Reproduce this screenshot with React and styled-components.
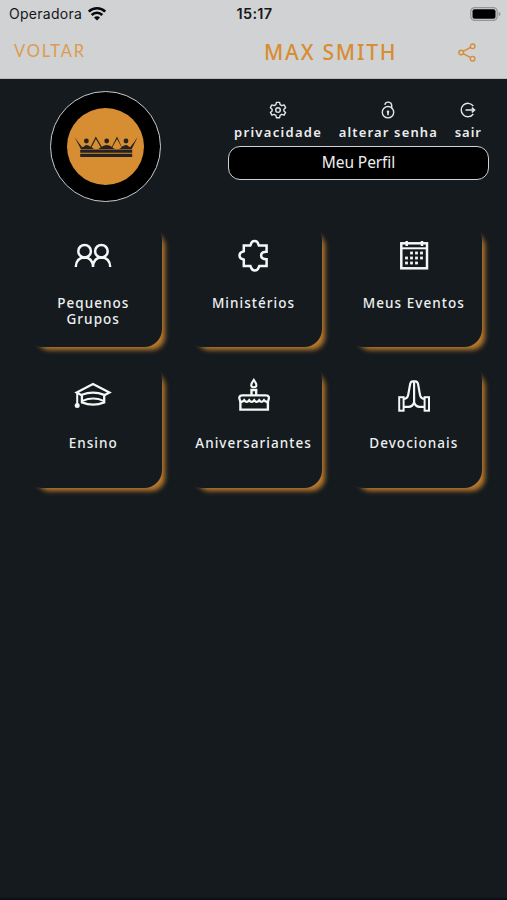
import React from 'react'
import styled, { createGlobalStyle } from 'styled-components'

const orange = '#d78d32'
const dark = '#141a1e'

const GlobalStyle = createGlobalStyle`
  * {
    box-sizing: border-box;
  }
  body {
    margin: 0;
    background: ${dark};
    font-family: 'Noto Sans', sans-serif;
  }
  svg {
    display: block;
    overflow: visible;
  }
`

const Screen = styled.div`
  width: 507px;
  height: 900px;
  overflow: hidden;
  background: ${dark};
  border-bottom: 2px solid #0c0f13;
`

const Header = styled.header`
  height: 79px;
  background: #d1d2d4;
  border-bottom: 1px solid #babcbf;
`

const StatusBar = styled.div`
  height: 27px;
  padding: 0 6px 0 9px;
  display: grid;
  grid-template-columns: 1fr auto 1fr;
  align-items: center;
  color: #161719;
  font-family: Inter, sans-serif;
  font-size: 14px;
`

const Carrier = styled.div`
  display: flex;
  align-items: center;
  gap: 6px;
  letter-spacing: 0.27px;
`

const Clock = styled.div`
  padding-right: 1px;
  font-weight: 600;
  font-size: 14.5px;
  letter-spacing: 0.3px;
`

const Battery = styled.div`
  justify-self: end;
`

const NavBar = styled.nav`
  height: 50px;
  padding: 0 31px 0 14px;
  display: flex;
  align-items: center;
  color: ${orange};
`

const BackButton = styled.button`
  width: 250px;
  padding: 0 0 2px;
  border: 0;
  background: none;
  color: #dc9b50;
  text-align: left;
  font: 400 16.5px/20px Lato, sans-serif;
  letter-spacing: 1.8px;
`

const Title = styled.h1`
  flex: 1;
  margin: 0;
  font-size: 21px;
  line-height: 24px;
  font-weight: 500;
  letter-spacing: 1.8px;
  white-space: nowrap;
`

const Profile = styled.section`
  padding: 12px 18px 0 50px;
  display: flex;
  justify-content: space-between;
`

const Avatar = styled.div`
  width: 111px;
  height: 111px;
  display: flex;
  align-items: center;
  justify-content: center;
  border: 1.5px solid #c9cacb;
  border-radius: 50%;
  background: #000;
`

const AvatarDisc = styled.div`
  width: 77px;
  height: 77px;
  display: flex;
  align-items: center;
  justify-content: center;
  border-radius: 50%;
  background: ${orange};
`

const ProfileMenu = styled.div`
  width: 261px;
  padding-top: 10px;
`

const Actions = styled.div`
  height: 45px;
  padding: 0 7px 0 6px;
  display: flex;
  justify-content: space-between;
`

const Action = styled.div`
  display: flex;
  flex-direction: column;
  align-items: center;
  gap: 5px;
  color: #eceded;
  font-size: 13px;
  line-height: 16px;
  font-weight: 600;
  letter-spacing: ${(props) => props.$spacing};
  white-space: nowrap;
`

const ProfileButton = styled.button`
  width: 100%;
  height: 34px;
  padding: 0 0 3px;
  border: 1.5px solid #d0d1d2;
  border-radius: 12px;
  background: #000;
  color: #eee;
  font: 400 15.5px/20px 'Noto Sans', sans-serif;
  letter-spacing: -0.1px;
`

const Grid = styled.main`
  padding: 19.5px 25px 0;
  display: grid;
  grid-template-columns: repeat(3, 136.5px);
  column-gap: 23.8px;
  row-gap: 15px;
`

/* the negative spread keeps the glow off the top right and bottom left corners */
const Card = styled.div`
  height: 125.5px;
  padding-top: 16px;
  display: flex;
  flex-direction: column;
  align-items: center;
  border-radius: 18px;
  background: ${dark};
  box-shadow: 7px 7px 5px -4px #b9792c;
`

const CardLabel = styled.div`
  width: ${(props) => props.$width || '130px'};
  margin-top: 21px;
  color: #eef0f0;
  font-size: 13.5px;
  line-height: 16px;
  font-weight: 500;
  letter-spacing: 1.05px;
  text-align: center;
`

function CardIcon({ children }) {
  return (
    <svg width="36" height="36" viewBox="0 0 36 36" fill="none" stroke="#f5f6f6" strokeWidth="2.5">
      {children}
    </svg>
  )
}

function WifiIcon() {
  return (
    <svg width="18" height="14" viewBox="0 0 18 14" fill="none" stroke="#08090a" strokeWidth="2.6">
      <path d="M.8 4.7a11.6 11.6 0 0 1 16.4 0" />
      <path d="M3.7 8a7.5 7.5 0 0 1 10.6 0" />
      <path d="M9 13.5 6 10.5a4.2 4.2 0 0 1 6 0z" fill="#08090a" stroke="none" />
    </svg>
  )
}

function BatteryIcon() {
  return (
    <svg width="31" height="14" viewBox="0 0 31 14">
      <rect x="0.8" y="0.6" width="26.4" height="12.8" rx="4" fill="none" stroke="#929496" strokeWidth="1.2" />
      <rect x="2.5" y="2.3" width="23" height="9.4" rx="2" fill="#000" />
      <path d="M28.7 4.8v4.4q1.8-.8 1.8-2.2t-1.8-2.2" fill="#929496" />
    </svg>
  )
}

function ShareIcon() {
  return (
    <svg width="18" height="19" viewBox="0 0 18 19" fill="none" stroke={orange} strokeWidth="1.4">
      <circle cx="3.2" cy="9.5" r="2.3" />
      <circle cx="14.6" cy="3.3" r="2.3" />
      <circle cx="14.6" cy="15.7" r="2.3" />
      <path d="m5.2 8.4 7.4-4M5.2 10.6l7.4 4" />
    </svg>
  )
}

function Crown() {
  return (
    <svg width="62" height="20" viewBox="0 0 62 20" fill="#252321">
      <path d="M-.4.3 6 12.300h50.600L62.600.3 55.300 10q-1.800-1.800-4-2-2.200.2-4.600 1.800L42-.6l-5.200 10.400q-2.600-1.800-5-1.800t-5 1.800L20.800-.6l-5.200 10.400Q13.400 8.200 11.200 8 9 8.200 7 10z" />
      <path d="m2.500 4 5.300 6.200 2.600-1.600zM20.900 2l-4.300 8.200q1.600 2 4.600 2t4.500-2zM42 2l-4.700 8.200q1.700 2 4.800 2t4.500-2zM60 4l-5.400 6-2.400-1.400z" fill={orange} />
      <circle cx="11.4" cy="4" r="2.4" />
      <circle cx="31.7" cy="4" r="2.4" />
      <circle cx="51" cy="4" r="2.4" />
      <path d="M5.2 12.800h52v2.900h-52zM5.200 16.700h52v3.200h-52z" />
    </svg>
  )
}

function GearIcon() {
  return (
    <svg width="18" height="18" viewBox="0 0 18 18" fill="none" stroke="#e5e6e7" strokeWidth="1.4" strokeLinejoin="round">
      <path d="M7.4 1.4 6.900 3.700l-1.700 1-2.300-.8-1.500 2.800 1.700 1.500v1.700l-1.700 1.500 1.500 2.800 2.300-.8 1.700 1 .5 2.300h3.200l.5-2.300 1.700-1 2.300.8 1.500-2.800-1.700-1.500V8.200l1.700-1.500-1.500-2.800-2.300.8-1.700-1-.5-2.300z" />
      <circle cx="9" cy="9.1" r="2.3" />
    </svg>
  )
}

function LockIcon() {
  return (
    <svg width="18" height="18" viewBox="0 0 18 18" fill="none" stroke="#e5e6e7" strokeWidth="1.4">
      <circle cx="9" cy="11.2" r="5.7" />
      <path d="M5.800 3.800a3.500 3.500 0 0 1 6.900.8v2.800" />
      <path d="M9 11v3.200" strokeWidth="1.6" />
      <circle cx="9" cy="10.8" r="1.3" fill="#e5e6e7" stroke="none" />
    </svg>
  )
}

function ExitIcon() {
  return (
    <svg width="18" height="18" viewBox="0 0 18 18" fill="none" stroke="#e5e6e7" strokeWidth="1.4">
      <path d="M14.3 5a6.700 6.700 0 1 0 0 8" />
      <path d="M6.5 9h9.300M12.800 6.600 15.600 9l-2.800 2.400" />
    </svg>
  )
}

function GroupsIcon() {
  return (
    <CardIcon>
      <circle cx="9.6" cy="13.2" r="6.3" />
      <circle cx="26.4" cy="13.2" r="6.3" />
      <path d="M.8 29q.2-9.200 8.800-9.500Q17.800 19.800 18 29q.2-9.200 8.400-9.500Q35 19.800 35.200 29" />
    </CardIcon>
  )
}

function PuzzleIcon() {
  return (
    <CardIcon>
      <path d="M7.8 7.500h6.600c.6-1.200.4-4.400 4.200-4.400s3.600 3.200 4.200 4.400h7.800v6.300c-1.500 0-5.500.2-5.500 3.700s4 3.700 5.500 3.700v6.900h-7.400c-.8 1.300-.6 4.400-4.400 4.400s-3.600-3.100-4.300-4.400H7.800v-6.500c-1.300-.6-4.300-.5-4.300-4.200s3-3.500 4.300-4.100z" />
    </CardIcon>
  )
}

function CalendarIcon() {
  const days = [
    [15.5, 15], [20.5, 15], [25.5, 15],
    [10.5, 20], [15.5, 20], [20.5, 20], [25.5, 20],
    [10.5, 25], [15.5, 25], [20.5, 25],
  ]
  return (
    <CardIcon>
      <rect x="5.3" y="5.3" width="25.7" height="25" />
      <path d="M5 10.300h26" strokeWidth="2" />
      <path d="M10.700 3v5M26 3v5" strokeWidth="2.5" />
      {days.map(([x, y]) => (
        <rect key={`${x}-${y}`} x={x - 1.4} y={y - 1.4} width="2.8" height="2.8" fill="#f5f6f6" stroke="none" />
      ))}
    </CardIcon>
  )
}

function CapIcon() {
  return (
    <CardIcon>
      <path d="M6.700 17.200 1.700 14.500l16.300-8.500 16.400 8.500-5.100 2.700" strokeWidth="2.3" />
      <path d="M6.900 16.800q11-4.200 22.300 0v7.600q-11 4.600-22.300 0z" strokeWidth="2.3" />
      <path d="M7.500 22.800q10.700-4.600 21.200 0" strokeWidth="2" />
      <path d="M2.200 14.500V26" strokeWidth="2" />
      <circle cx="2.2" cy="27.4" r="2.5" fill="#f5f6f6" stroke="none" />
    </CardIcon>
  )
}

function CakeIcon() {
  return (
    <CardIcon>
      <path d="M17.800 1.800q-5.200 7 0 7.400 5.200-.4 0-7.400z" strokeWidth="2.1" />
      <path d="M15.500 17v-5h4.700v5" strokeWidth="2.4" />
      <path d="M4.400 23v8.600h27.500V23" strokeWidth="2.4" />
      <path d="M4.300 23.400Q1.600 17.300 6.300 17.300h23.600q4.700 0 2.100 6.100-2.500 1-4-1.200-2.200 3.300-4.800 0-2.500 3.300-5 0-2.500 3.300-5 0-2.500 3.300-5 0-1.500 2.200-3.900 1.200z" strokeWidth="2.3" />
    </CardIcon>
  )
}

function PrayIcon() {
  return (
    <CardIcon>
      <rect x="3.2" y="19.2" width="4.4" height="13.5" strokeWidth="2" />
      <rect x="28.6" y="19.2" width="4.4" height="13.5" strokeWidth="2" />
      <path d="M8 20.800q3.600 0 4.300-4.400l1.900-10.600q.6-2.500 2.600-2.500h2.600q2 0 2.600 2.500l1.900 10.600q.7 4.400 4.300 4.400M18.100 4v20.500q-1.600 4.300-5.400 4.300H8M18.100 24.500q1.600 4.300 5.400 4.300h4.700" strokeWidth="2.2" />
    </CardIcon>
  )
}

const cards = [
  { label: 'Pequenos Grupos', Icon: GroupsIcon, width: '90px' },
  { label: 'Ministérios', Icon: PuzzleIcon },
  { label: 'Meus Eventos', Icon: CalendarIcon },
  { label: 'Ensino', Icon: CapIcon },
  { label: 'Aniversariantes', Icon: CakeIcon },
  { label: 'Devocionais', Icon: PrayIcon },
]

function App() {
  return (
    <Screen>
      <GlobalStyle />
      <Header>
        <StatusBar>
          <Carrier>
            <span>Operadora</span>
            <WifiIcon />
          </Carrier>
          <Clock>15:17</Clock>
          <Battery>
            <BatteryIcon />
          </Battery>
        </StatusBar>
        <NavBar>
          <BackButton>VOLTAR</BackButton>
          <Title>MAX SMITH</Title>
          <ShareIcon />
        </NavBar>
      </Header>
      <Profile>
        <Avatar>
          <AvatarDisc>
            <Crown />
          </AvatarDisc>
        </Avatar>
        <ProfileMenu>
          <Actions>
            <Action $spacing="1.3px">
              <GearIcon />
              <span>privacidade</span>
            </Action>
            <Action $spacing="1.15px">
              <LockIcon />
              <span>alterar senha</span>
            </Action>
            <Action $spacing="1px">
              <ExitIcon />
              <span>sair</span>
            </Action>
          </Actions>
          <ProfileButton>Meu Perfil</ProfileButton>
        </ProfileMenu>
      </Profile>
      <Grid>
        {cards.map(({ label, Icon, width }) => (
          <Card key={label}>
            <Icon />
            <CardLabel $width={width}>{label}</CardLabel>
          </Card>
        ))}
      </Grid>
    </Screen>
  )
}

export default App
